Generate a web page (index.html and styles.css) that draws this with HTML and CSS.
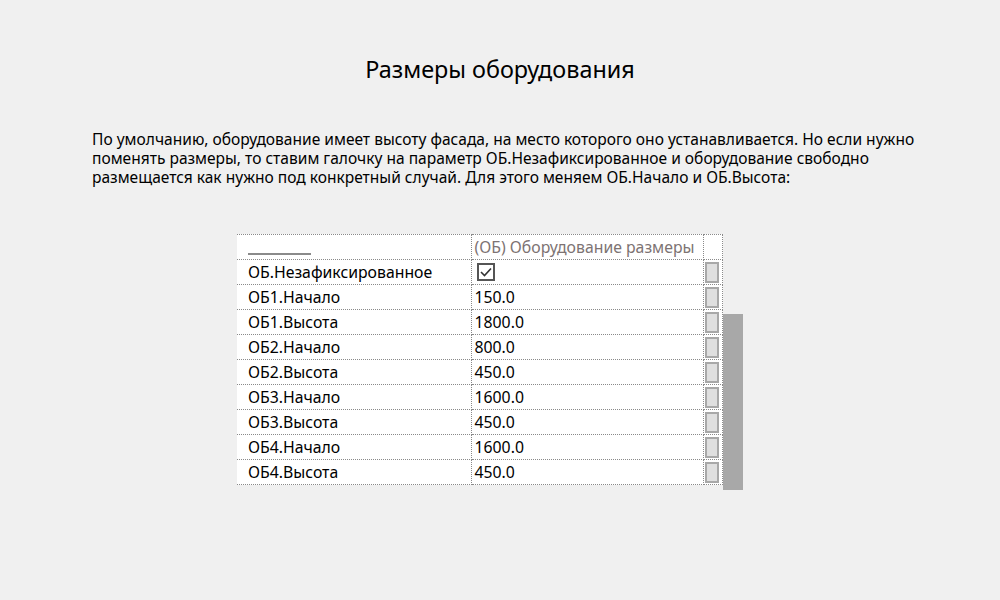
FILE: index.html
```html
<!DOCTYPE html>
<html lang="ru">
<head>
  <meta charset="UTF-8">
  <title>Размеры оборудования</title>
  <link rel="stylesheet" href="styles.css">
</head>
<body>

<main class="page">
  <h1 class="title">Размеры оборудования</h1>

  <p class="intro">По умолчанию, оборудование имеет высоту фасада, на место которого оно устанавливается. Но если нужно поменять размеры, то ставим галочку на параметр ОБ.Незафиксированное и оборудование свободно размещается как нужно под конкретный случай. Для этого меняем ОБ.Начало и ОБ.Высота:</p>

  <!-- Properties grid -->
  <div class="props">
    <table class="props-table">
      <tr class="head">
        <td class="name"><span class="underline"></span></td>
        <td class="value muted">(ОБ) Оборудование размеры</td>
        <td class="btn"></td>
      </tr>
      <tr>
        <td class="name">ОБ.Незафиксированное</td>
        <td class="value">
          <svg class="check" width="18" height="18" viewBox="0 0 18 18">
            <rect x="1" y="1" width="16" height="16" fill="#fff" stroke="#555" stroke-width="2"/>
            <path d="M4 9 L7.5 12.5 L14 5.5" fill="none" stroke="#333" stroke-width="1.6"/>
          </svg>
        </td>
        <td class="btn"><span class="box"></span></td>
      </tr>
      <tr><td class="name">ОБ1.Начало</td><td class="value">150.0</td><td class="btn"><span class="box"></span></td></tr>
      <tr><td class="name">ОБ1.Высота</td><td class="value">1800.0</td><td class="btn"><span class="box"></span></td></tr>
      <tr><td class="name">ОБ2.Начало</td><td class="value">800.0</td><td class="btn"><span class="box"></span></td></tr>
      <tr><td class="name">ОБ2.Высота</td><td class="value">450.0</td><td class="btn"><span class="box"></span></td></tr>
      <tr><td class="name">ОБ3.Начало</td><td class="value">1600.0</td><td class="btn"><span class="box"></span></td></tr>
      <tr><td class="name">ОБ3.Высота</td><td class="value">450.0</td><td class="btn"><span class="box"></span></td></tr>
      <tr><td class="name">ОБ4.Начало</td><td class="value">1600.0</td><td class="btn"><span class="box"></span></td></tr>
      <tr><td class="name">ОБ4.Высота</td><td class="value">450.0</td><td class="btn"><span class="box"></span></td></tr>
    </table>
    <div class="scroll"><div class="thumb"></div></div>
  </div>
</main>

</body>
</html>
```

FILE: styles.css
```css
* { box-sizing: border-box; margin: 0; padding: 0; }
body { background: #f0f0f0; color: #000; font-family: 'Noto Sans', sans-serif; }

.page { width: 1000px; height: 600px; padding-top: 52px; }
.title { font-weight: 400; font-size: 23.4px; text-align: center; line-height: 34px; color: #000; }

.intro { margin: 44px 0 0 92px; width: 850px; font-size: 15.55px; line-height: 19px; color: #000; }

/* Properties grid */
.props { display: flex; margin: 47px 0 0 237px; }
.props-table {
  border-collapse: collapse; background: #fff;
  font-family: 'Noto Sans', sans-serif; font-size: 15.8px; color: #000;
}
.props-table td { height: 25px; border: 1px dotted #8a8a8a; padding: 0; vertical-align: middle; line-height: 20px; }
.props-table td:first-child { border-left: none; }
.props-table .name { width: 234px; padding-left: 11px; }
.props-table .value { width: 232px; padding-left: 3px; }
.props-table .btn { width: 19px; padding: 1px 2px 1px 1px; }
.props-table .muted { color: #7d7373; }
.underline { display: block; width: 63px; height: 2px; background: #8a8a8a; margin-top: 14px; }
.check { display: block; margin-left: 2px; }
.box { display: block; width: 14px; height: 21px; background: #dfdfdf; border: 2px solid #a8a8a8; }

.scroll { width: 20px; display: flex; flex-direction: column; justify-content: flex-end; }
.thumb { height: 176px; background: #a8a8a8; margin-bottom: -5px; }
```
